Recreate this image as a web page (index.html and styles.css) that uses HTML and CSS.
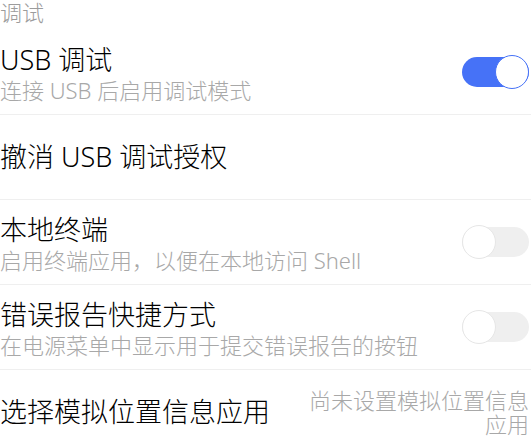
FILE: index.html
```html
<!DOCTYPE html>
<html lang="zh-CN">
<head>
    <meta charset="UTF-8">
    <meta name="viewport" content="width=device-width, initial-scale=1.0">
    <title>调试</title>
    <link rel="stylesheet" href="styles.css">
</head>
<body>
    <div class="settings">
        <div class="section-header">调试</div>

        <!-- USB debugging -->
        <div class="pref">
            <div class="pref-text two-line">
                <div class="pref-title">USB 调试</div>
                <div class="pref-summary">连接 USB 后启用调试模式</div>
            </div>
            <div class="switch on"><span class="thumb"></span></div>
        </div>

        <div class="pref">
            <div class="pref-text">
                <div class="pref-title">撤消 USB 调试授权</div>
            </div>
        </div>

        <div class="pref">
            <div class="pref-text two-line">
                <div class="pref-title">本地终端</div>
                <div class="pref-summary">启用终端应用，以便在本地访问 Shell</div>
            </div>
            <div class="switch"><span class="thumb"></span></div>
        </div>

        <div class="pref">
            <div class="pref-text two-line">
                <div class="pref-title">错误报告快捷方式</div>
                <div class="pref-summary">在电源菜单中显示用于提交错误报告的按钮</div>
            </div>
            <div class="switch"><span class="thumb"></span></div>
        </div>

        <div class="pref">
            <div class="pref-text">
                <div class="pref-title">选择模拟位置信息应用</div>
            </div>
            <div class="pref-value">尚未设置模拟位置信息应用</div>
        </div>
    </div>
</body>
</html>
```

FILE: styles.css
```css
/* General Styles */
body {
    margin: 0;
    padding: 0;
    background: #fff;
    font-family: "Noto Sans", "Noto Sans CJK SC", sans-serif;
    font-weight: 300;
    color: #000;
}

.settings {
    width: 531px;
    overflow: hidden;
}

.section-header {
    font-size: 22px;
    line-height: 24px;
    height: 30px;
    color: #9c9c9c;
}

.pref {
    display: flex;
    align-items: center;
    box-sizing: border-box;
    height: 85px;
    border-bottom: 1px solid #efefef;
    padding-right: 2px;
}

.pref-text {
    flex: 1;
    min-width: 0;
}

.pref-text.two-line {
    padding-top: 4px;
}

.pref-title {
    font-size: 27px;
    line-height: 32px;
    white-space: nowrap;
}

.pref-summary {
    font-size: 22px;
    line-height: 28px;
    color: #a8a8a8;
    white-space: nowrap;
}

.pref-value {
    flex: 0 0 228px;
    font-size: 22px;
    line-height: 24px;
    color: #a8a8a8;
    text-align: right;
}

/* Switch */
.switch {
    position: relative;
    flex: 0 0 67px;
    height: 30px;
    border-radius: 15px;
    background: #efefef;
}

.switch .thumb {
    position: absolute;
    top: -2px;
    left: 0;
    width: 32px;
    height: 32px;
    border-radius: 50%;
    background: #fff;
    border: 1px solid #e6e6e6;
}

.switch.on {
    background: #4672f7;
}

.switch.on .thumb {
    left: auto;
    right: 0;
    border-color: #4672f7;
}
```
